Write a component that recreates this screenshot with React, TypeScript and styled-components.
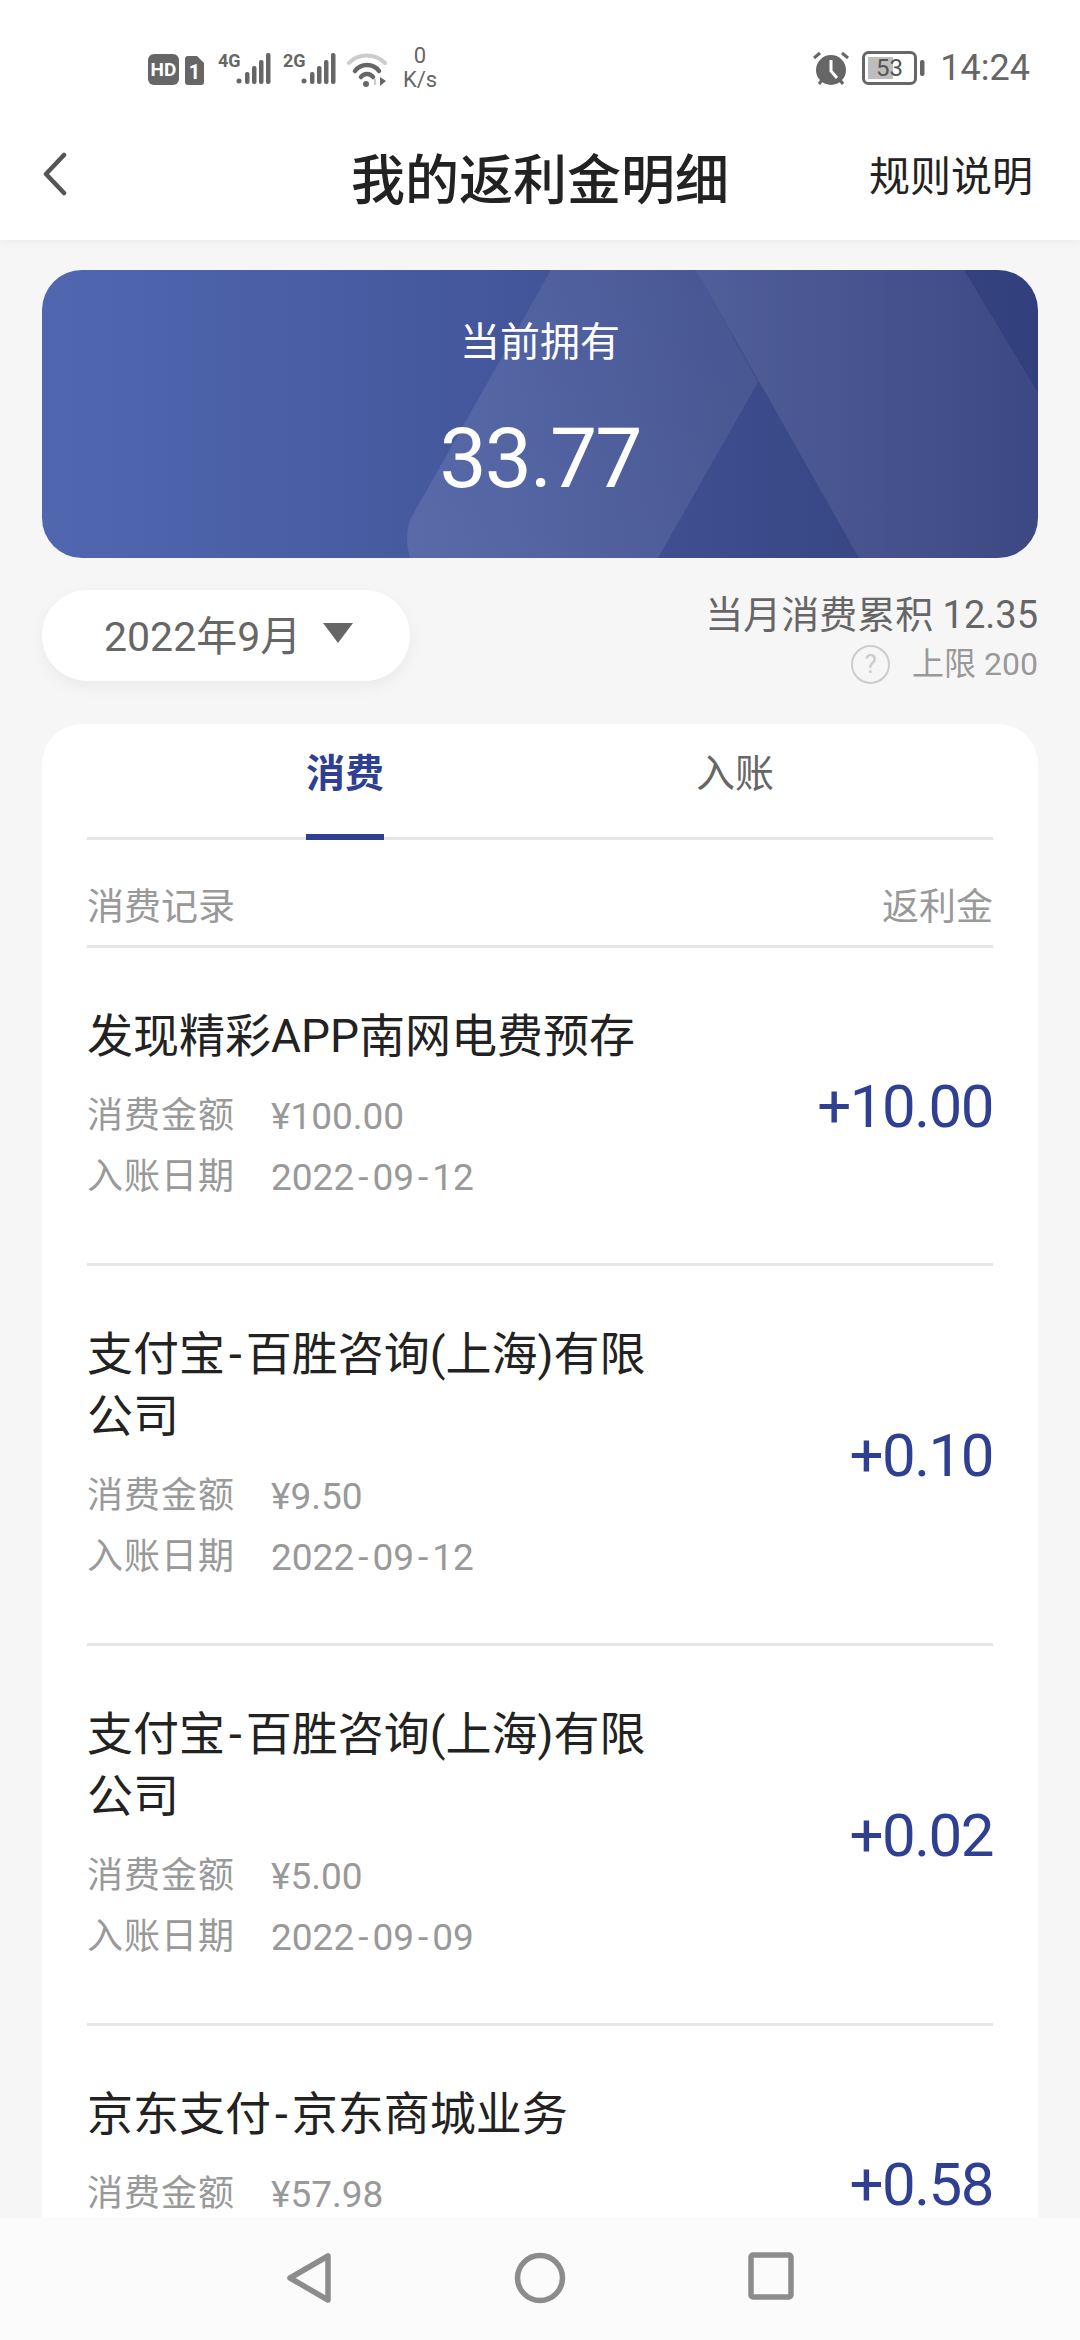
import styled, { createGlobalStyle } from 'styled-components';

const GlobalStyle = createGlobalStyle`
  html, body {
    margin: 0;
    padding: 0;
    background: #f6f6f6;
  }
  * {
    box-sizing: border-box;
  }
`;

const Page = styled.div`
  position: relative;
  width: 1080px;
  height: 2340px;
  overflow: hidden;
  background: #f6f6f6;
  font-family: Roboto, 'Noto Sans CJK SC', sans-serif;
`;

const Header = styled.header`
  background: #fff;
  box-shadow: 0 2px 8px rgba(0, 0, 0, 0.05);
`;

const StatusBar = styled.div`
  height: 120px;
  padding: 46px 50px 0 148px;
  display: flex;
  justify-content: space-between;
  align-items: flex-start;
  color: #666;
`;

const StatusGroup = styled.div`
  display: flex;
  align-items: center;
`;

const Speed = styled.div`
  width: 40px;
  margin-left: 13px;
  text-align: center;
  font-size: 22px;
  line-height: 24px;
  margin-top: -2px;
`;

const Clock = styled.div`
  margin-left: 14px;
  font-size: 36px;
  line-height: 44px;
`;

const NavBar = styled.nav`
  position: relative;
  height: 120px;
  display: flex;
  align-items: center;
  justify-content: center;
  padding-bottom: 8px;
`;

const BackButton = styled.div`
  position: absolute;
  left: 42px;
  top: 32px;
  line-height: 0;
`;

const Title = styled.h1`
  margin: 0;
  font-size: 54px;
  font-weight: 500;
  color: #222;
`;

const RuleLink = styled.div`
  position: absolute;
  right: 47px;
  top: 29px;
  font-size: 41px;
  line-height: 56px;
  color: #222;
`;

const Content = styled.main`
  padding: 30px 42px 0;
`;

const Balance = styled.section`
  position: relative;
  height: 288px;
  border-radius: 40px;
  overflow: hidden;
  background: linear-gradient(90deg, #5067b0 0%, #44579c 45%, #3a4988 75%, #323f7d 100%);
  color: #fff;
  display: flex;
  flex-direction: column;
  align-items: center;
`;

const BalanceArt = styled.svg`
  position: absolute;
  inset: 0;
`;

const BalanceLabel = styled.div`
  position: relative;
  margin-top: 45px;
  font-size: 40px;
  line-height: 56px;
`;

const BalanceValue = styled.div`
  position: relative;
  margin-top: 42px;
  font-size: 84px;
  line-height: 92px;
  letter-spacing: -2px;
`;

const Summary = styled.div`
  margin-top: 32px;
  display: flex;
  justify-content: space-between;
  align-items: flex-start;
`;

const MonthPicker = styled.div`
  width: 368px;
  height: 91px;
  border-radius: 46px;
  background: #fff;
  box-shadow: 0 6px 16px rgba(0, 0, 0, 0.05);
  display: flex;
  align-items: center;
  padding: 0 0 6px 62px;
  gap: 22px;
  font-size: 41px;
  color: #666;
`;

const Caret = styled.span`
  width: 0;
  height: 0;
  border-left: 15px solid transparent;
  border-right: 15px solid transparent;
  border-top: 20px solid #666;
`;

const Totals = styled.div`
  display: flex;
  flex-direction: column;
  align-items: flex-end;
`;

const TotalLine = styled.div`
  font-size: 38px;
  line-height: 50px;
  color: #666;
`;

const LimitLine = styled.div`
  display: flex;
  align-items: center;
  gap: 22px;
  font-size: 32px;
  line-height: 40px;
  margin-top: 4px;
  color: #999;
`;

const Help = styled.span`
  width: 39px;
  height: 39px;
  border: 2px solid #ccc;
  border-radius: 50%;
  color: #ccc;
  font-size: 26px;
  line-height: 35px;
  text-align: center;
`;

const RecordCard = styled.section`
  margin-top: 40px;
  padding: 0 45px;
  background: #fff;
  border-radius: 40px 40px 0 0;
`;

const Tabs = styled.div`
  height: 116px;
  display: flex;
  justify-content: center;
  border-bottom: 3px solid #e6e6e6;
`;

const Tab = styled.div<{ $active?: boolean }>`
  position: relative;
  width: 390px;
  padding-top: 22px;
  text-align: center;
  font-size: 39px;
  line-height: 56px;
  font-weight: ${(p) => (p.$active ? 700 : 400)};
  color: ${(p) => (p.$active ? '#2f3f92' : '#666')};

  ${(p) =>
    p.$active &&
    `&::after {
      content: '';
      position: absolute;
      left: 50%;
      bottom: -3px;
      width: 78px;
      height: 6px;
      margin-left: -39px;
      background: #2f3f92;
    }`}
`;

const ColumnHead = styled.div`
  height: 108px;
  display: flex;
  justify-content: space-between;
  align-items: center;
  padding-top: 22px;
  border-bottom: 3px solid #e6e6e6;
  font-size: 37px;
  color: #999;
`;

const Row = styled.div`
  display: flex;
  justify-content: space-between;
  align-items: center;
  padding: 57px 0 55px;
  border-bottom: 3px solid #e6e6e6;
`;

const RowMain = styled.div`
  width: 590px;
`;

const RowTitle = styled.div`
  font-size: 46px;
  line-height: 62px;
  margin-bottom: 19px;
  color: #222;
`;

const Meta = styled.div`
  display: flex;
  gap: 36px;
  font-size: 37px;
  line-height: 61px;
  color: #999;
`;

const MetaLabel = styled.span`
  width: 148px;
  white-space: nowrap;
  font-size: 36px;
  letter-spacing: 1px;
`;

const Dash = styled.span`
  margin: 0 4px;
`;

const Rebate = styled.div`
  font-size: 60px;
  line-height: 72px;
  letter-spacing: -1.5px;
  color: #2f3f92;
`;

const SystemNav = styled.div`
  position: absolute;
  left: 0;
  right: 0;
  bottom: 0;
  height: 122px;
  background: #fbfbfb;
  display: flex;
  justify-content: center;
  align-items: flex-start;
  padding-top: 34px;
  gap: 182px;
`;

const records = [
  { title: '发现精彩APP南网电费预存', spend: '¥100.00', date: '2022-09-12', rebate: '+10.00' },
  { title: '支付宝-百胜咨询(上海)有限公司', spend: '¥9.50', date: '2022-09-12', rebate: '+0.10' },
  { title: '支付宝-百胜咨询(上海)有限公司', spend: '¥5.00', date: '2022-09-09', rebate: '+0.02' },
  { title: '京东支付-京东商城业务', spend: '¥57.98', date: '2022-09-08', rebate: '+0.58' },
];

const withDash = (text: string) =>
  text.split('-').map((part, i) => (
    <span key={i}>
      {i > 0 && <Dash>-</Dash>}
      {part}
    </span>
  ));

const SignalIcon = ({ label }: { label: string }) => (
  <svg width="54" height="34" viewBox="0 0 54 34" fill="#666">
    <text x="0" y="15" fontSize="18" fontWeight="700" fontFamily="Roboto, sans-serif">
      {label}
    </text>
    <circle cx="21" cy="29" r="2.5" />
    <rect x="27" y="20" width="4.5" height="12" rx="2" />
    <rect x="34" y="14" width="4.5" height="18" rx="2" />
    <rect x="41" y="8" width="4.5" height="24" rx="2" />
    <rect x="48" y="1" width="4.5" height="31" rx="2" />
  </svg>
);

const App = () => (
  <Page>
    <GlobalStyle />
    <Header>
      <StatusBar>
        <StatusGroup>
          <svg width="56" height="34" viewBox="0 0 56 34">
            <rect x="0" y="2" width="31" height="31" rx="6" fill="#666" />
            <text x="15.5" y="24" fontSize="19" fontWeight="700" fill="#fff" textAnchor="middle" fontFamily="Roboto, sans-serif">
              HD
            </text>
            <path d="M40 4h9l7 7v19a3 3 0 0 1-3 3H40a3 3 0 0 1-3-3V7a3 3 0 0 1 3-3z" fill="#666" />
            <text x="46.5" y="27" fontSize="20" fontWeight="700" fill="#fff" textAnchor="middle" fontFamily="Roboto, sans-serif">
              1
            </text>
          </svg>
          <svg width="14" height="1" />
          <SignalIcon label="4G" />
          <svg width="11" height="1" />
          <SignalIcon label="2G" />
          <svg width="10" height="1" />
          <svg width="40" height="36" viewBox="0 0 40 36" fill="none">
            <path d="M2 12C11 2 28 2 38 12" stroke="#ccc" strokeWidth="4" strokeLinecap="round" />
            <path d="M8 20C14 12 26 12 32 20" stroke="#666" strokeWidth="4.5" strokeLinecap="round" />
            <path d="M14 26C17 22 23 22 26 26" stroke="#666" strokeWidth="4.5" strokeLinecap="round" />
            <circle cx="19" cy="33" r="3" fill="#666" />
            <path d="M33 26l6 4-6 5z" fill="#666" />
            <path d="M28 28v6" stroke="#ccc" strokeWidth="2" />
          </svg>
          <Speed>
            0
            <br />
            K/s
          </Speed>
        </StatusGroup>
        <StatusGroup>
          <svg width="38" height="36" viewBox="0 0 38 36" fill="#666">
            <circle cx="19" cy="20" r="15" />
            <path d="M19 10v11l6 7" stroke="#fff" strokeWidth="3" fill="none" />
            <path d="M2 8l6-5M36 8l-6-5M7 34l3-4M31 34l-3-4" stroke="#666" strokeWidth="3" />
          </svg>
          <svg width="12" height="1" />
          <svg width="64" height="34" viewBox="0 0 64 34" fill="none">
            <rect x="1.5" y="1.5" width="52" height="31" rx="5" stroke="#666" strokeWidth="3" />
            <rect x="6" y="6" width="25" height="22" fill="#bdbdbd" />
            <rect x="58" y="9" width="4.5" height="16" rx="2" fill="#666" />
            <text x="27.5" y="25" fontSize="24" fill="#555" textAnchor="middle" fontFamily="Roboto, sans-serif">
              53
            </text>
          </svg>
          <Clock>14:24</Clock>
        </StatusGroup>
      </StatusBar>
      <NavBar>
        <BackButton>
          <svg width="26" height="44" viewBox="0 0 26 44" fill="none">
            <path d="M22 3L4 22l18 19" stroke="#555" strokeWidth="4.5" strokeLinecap="round" strokeLinejoin="round" />
          </svg>
        </BackButton>
        <Title>我的返利金明细</Title>
        <RuleLink>规则说明</RuleLink>
      </NavBar>
    </Header>
    <Content>
      <Balance>
        <BalanceArt width="996" height="288" viewBox="0 0 996 288">
          <defs>
            <linearGradient id="bandLeft" x1="0" y1="1" x2="1" y2="0">
              <stop offset="0" stopColor="#fff" stopOpacity="0.1" />
              <stop offset="1" stopColor="#fff" stopOpacity="0.06" />
            </linearGradient>
            <linearGradient id="bandRight" x1="0" y1="0" x2="1" y2="0">
              <stop offset="0" stopColor="#fff" stopOpacity="0.1" />
              <stop offset="1" stopColor="#fff" stopOpacity="0.05" />
            </linearGradient>
          </defs>
          <path d="M509 0L368 250Q362 268 368 288H616L716 112L654 0Z" fill="url(#bandLeft)" />
          <path d="M654 0L817 288H996V123L922 0Z" fill="url(#bandRight)" />
        </BalanceArt>
        <BalanceLabel>当前拥有</BalanceLabel>
        <BalanceValue>33.77</BalanceValue>
      </Balance>
      <Summary>
        <MonthPicker>
          2022年9月
          <Caret />
        </MonthPicker>
        <Totals>
          <TotalLine>当月消费累积 12.35</TotalLine>
          <LimitLine>
            <Help>?</Help>
            上限 200
          </LimitLine>
        </Totals>
      </Summary>
      <RecordCard>
        <Tabs>
          <Tab $active>消费</Tab>
          <Tab>入账</Tab>
        </Tabs>
        <ColumnHead>
          <span>消费记录</span>
          <span>返利金</span>
        </ColumnHead>
        {records.map((record, index) => (
          <Row key={index}>
            <RowMain>
              <RowTitle>{withDash(record.title)}</RowTitle>
              <Meta>
                <MetaLabel>消费金额</MetaLabel>
                {record.spend}
              </Meta>
              <Meta>
                <MetaLabel>入账日期</MetaLabel>
                <span>{withDash(record.date)}</span>
              </Meta>
            </RowMain>
            <Rebate>{record.rebate}</Rebate>
          </Row>
        ))}
      </RecordCard>
    </Content>
    <SystemNav>
      <svg width="46" height="52" viewBox="0 0 46 52" fill="none" stroke="#8c8c8c" strokeWidth="5.5" strokeLinejoin="round">
        <path d="M42 4V48L4 26Z" />
      </svg>
      <svg width="52" height="52" viewBox="0 0 52 52" fill="none" stroke="#8c8c8c" strokeWidth="5.5">
        <circle cx="26" cy="26" r="22.5" />
      </svg>
      <svg width="46" height="48" viewBox="0 0 46 48" fill="none" stroke="#8c8c8c" strokeWidth="5.5" strokeLinejoin="round">
        <rect x="3" y="3" width="40" height="42" rx="2" />
      </svg>
    </SystemNav>
  </Page>
);

export default App;
